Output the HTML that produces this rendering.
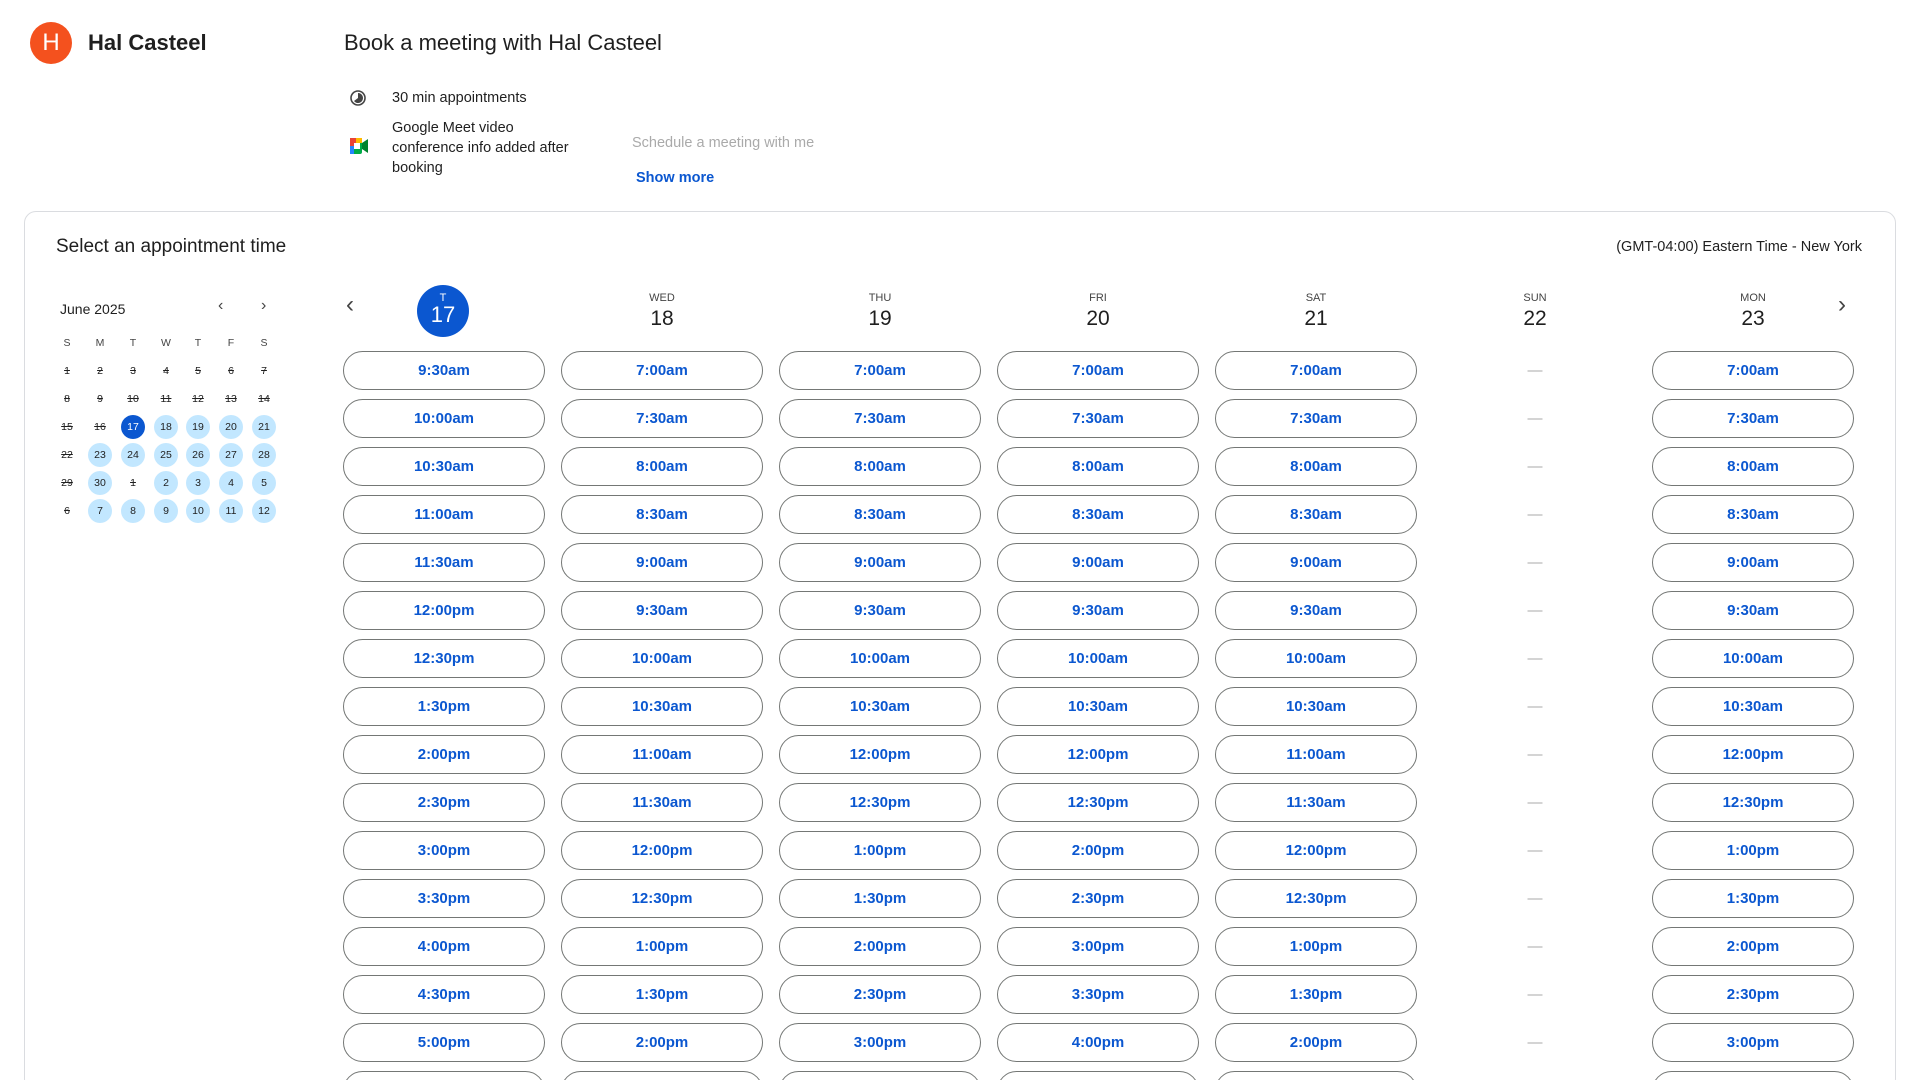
<!DOCTYPE html><html><head><meta charset="utf-8"><style>
*{box-sizing:border-box;margin:0;padding:0}
html{height:1080px;overflow:hidden}
body{width:1920px;height:1080px;overflow:hidden;background:#fff;font-family:"Liberation Sans",sans-serif;color:#1f1f1f;position:relative}
.a{position:absolute}
.card{position:absolute;left:24px;top:211px;width:1872px;height:880px;border:1.5px solid #dadce0;border-radius:12px}
.col{position:absolute;top:351px;width:202px;display:flex;flex-direction:column;gap:9px}
.col div{height:39px;border:1px solid #747775;border-radius:20px;color:#0b57d0;font-size:15px;font-weight:bold;display:flex;align-items:center;justify-content:center}
.col.sun div{border:none;color:#aaa;font-weight:normal}
.hd{position:absolute;top:292px;width:100px;text-align:center}
.hd .n{font-size:11px;color:#444}
.hd .d{font-size:21px;margin-top:3px}
.mc{position:absolute;left:50px;top:331px}
.mc span{position:absolute;width:24px;height:24px;margin:3px;border-radius:50%;display:flex;align-items:center;justify-content:center;font-size:10.5px;color:#1f1f1f}
.mc span.p{text-decoration:line-through}
.mc span.b{background:#c2e7ff}
.mc span.s{background:#0b57d0;color:#fff}
.mc span.h{font-size:10.5px;color:#444}
</style></head><body>
<div class="a" style="left:30px;top:22px;width:42px;height:42px;border-radius:50%;background:#f4511e;color:#fff;font-size:24px;display:flex;align-items:center;justify-content:center">H</div>
<div class="a" style="left:88px;top:30px;font-size:22px;font-weight:bold">Hal Casteel</div>
<div class="a" style="left:344px;top:30px;font-size:22px">Book a meeting with Hal Casteel</div>
<svg class="a" style="left:349px;top:89px" width="18" height="18" viewBox="0 0 18 18"><circle cx="9" cy="9" r="7" fill="none" stroke="#444" stroke-width="1.6"/><path d="M9 4 A5 5 0 1 1 5 12 L9 9Z" fill="#444"/></svg>
<div class="a" style="left:392px;top:90px;font-size:14.5px">30 min appointments</div>
<svg class="a" style="left:350px;top:138px" width="18" height="16" viewBox="0 0 18 16"><rect x="0" y="0" width="12" height="16" rx="2" fill="#00ac47"/><rect x="0" y="0" width="6" height="8" fill="#ea4335"/><rect x="0" y="8" width="4" height="8" fill="#2684fc"/><rect x="6" y="0" width="6" height="5" fill="#ffba00"/><rect x="4" y="5" width="6" height="6" fill="#fff"/><path d="M12 5 L18 1 L18 15 L12 11Z" fill="#00832d"/></svg>
<div class="a" style="left:392px;top:118px;font-size:14.5px;line-height:20px">Google Meet video<br>conference info added after<br>booking</div>
<div class="a" style="left:632px;top:135px;font-size:14.5px;color:#aaa">Schedule a meeting with me</div>
<div class="a" style="left:636px;top:170px;font-size:14.5px;color:#0b57d0;font-weight:bold">Show more</div>
<div class="card"></div>
<div class="a" style="left:56px;top:236px;font-size:19px">Select an appointment time</div>
<div class="a" style="right:58px;top:239px;font-size:14.5px">(GMT-04:00) Eastern Time - New York</div>
<div class="a" style="left:60px;top:301px;font-size:14px">June 2025</div>
<div class="a" style="left:218px;top:297px;font-size:16px;color:#444">&lsaquo;</div>
<div class="a" style="left:261px;top:297px;font-size:16px;color:#444">&rsaquo;</div>
<div class="mc">
<span class="h" style="left:2px;top:-3px">S</span><span class="h" style="left:35px;top:-3px">M</span><span class="h" style="left:68px;top:-3px">T</span><span class="h" style="left:101px;top:-3px">W</span><span class="h" style="left:133px;top:-3px">T</span><span class="h" style="left:166px;top:-3px">F</span><span class="h" style="left:199px;top:-3px">S</span>
<span class="p" style="left:2px;top:25px">1</span><span class="p" style="left:35px;top:25px">2</span><span class="p" style="left:68px;top:25px">3</span><span class="p" style="left:101px;top:25px">4</span><span class="p" style="left:133px;top:25px">5</span><span class="p" style="left:166px;top:25px">6</span><span class="p" style="left:199px;top:25px">7</span>
<span class="p" style="left:2px;top:53px">8</span><span class="p" style="left:35px;top:53px">9</span><span class="p" style="left:68px;top:53px">10</span><span class="p" style="left:101px;top:53px">11</span><span class="p" style="left:133px;top:53px">12</span><span class="p" style="left:166px;top:53px">13</span><span class="p" style="left:199px;top:53px">14</span>
<span class="p" style="left:2px;top:81px">15</span><span class="p" style="left:35px;top:81px">16</span><span class="s" style="left:68px;top:81px">17</span><span class="b" style="left:101px;top:81px">18</span><span class="b" style="left:133px;top:81px">19</span><span class="b" style="left:166px;top:81px">20</span><span class="b" style="left:199px;top:81px">21</span>
<span class="p" style="left:2px;top:109px">22</span><span class="b" style="left:35px;top:109px">23</span><span class="b" style="left:68px;top:109px">24</span><span class="b" style="left:101px;top:109px">25</span><span class="b" style="left:133px;top:109px">26</span><span class="b" style="left:166px;top:109px">27</span><span class="b" style="left:199px;top:109px">28</span>
<span class="p" style="left:2px;top:137px">29</span><span class="b" style="left:35px;top:137px">30</span><span class="p" style="left:68px;top:137px">1</span><span class="b" style="left:101px;top:137px">2</span><span class="b" style="left:133px;top:137px">3</span><span class="b" style="left:166px;top:137px">4</span><span class="b" style="left:199px;top:137px">5</span>
<span class="p" style="left:2px;top:165px">6</span><span class="b" style="left:35px;top:165px">7</span><span class="b" style="left:68px;top:165px">8</span><span class="b" style="left:101px;top:165px">9</span><span class="b" style="left:133px;top:165px">10</span><span class="b" style="left:166px;top:165px">11</span><span class="b" style="left:199px;top:165px">12</span>
</div>
<div class="a" style="left:346px;top:291px;font-size:24px;color:#444">&lsaquo;</div>
<div class="a" style="left:1838px;top:291px;font-size:24px;color:#444">&rsaquo;</div>
<div class="a" style="left:417px;top:285px;width:52px;height:52px;border-radius:50%;background:#0b57d0;color:#fff;text-align:center"><div style="font-size:11px;margin-top:7px">T</div><div style="font-size:22px;line-height:22px">17</div></div>
<div class="hd" style="left:612px"><div class="n">WED</div><div class="d">18</div></div>
<div class="hd" style="left:830px"><div class="n">THU</div><div class="d">19</div></div>
<div class="hd" style="left:1048px"><div class="n">FRI</div><div class="d">20</div></div>
<div class="hd" style="left:1266px"><div class="n">SAT</div><div class="d">21</div></div>
<div class="hd" style="left:1485px"><div class="n">SUN</div><div class="d">22</div></div>
<div class="hd" style="left:1703px"><div class="n">MON</div><div class="d">23</div></div>
<div class="col" style="left:343px"><div>9:30am</div><div>10:00am</div><div>10:30am</div><div>11:00am</div><div>11:30am</div><div>12:00pm</div><div>12:30pm</div><div>1:30pm</div><div>2:00pm</div><div>2:30pm</div><div>3:00pm</div><div>3:30pm</div><div>4:00pm</div><div>4:30pm</div><div>5:00pm</div><div>5:30pm</div></div>
<div class="col" style="left:561px"><div>7:00am</div><div>7:30am</div><div>8:00am</div><div>8:30am</div><div>9:00am</div><div>9:30am</div><div>10:00am</div><div>10:30am</div><div>11:00am</div><div>11:30am</div><div>12:00pm</div><div>12:30pm</div><div>1:00pm</div><div>1:30pm</div><div>2:00pm</div><div>2:30pm</div></div>
<div class="col" style="left:779px"><div>7:00am</div><div>7:30am</div><div>8:00am</div><div>8:30am</div><div>9:00am</div><div>9:30am</div><div>10:00am</div><div>10:30am</div><div>12:00pm</div><div>12:30pm</div><div>1:00pm</div><div>1:30pm</div><div>2:00pm</div><div>2:30pm</div><div>3:00pm</div><div>3:30pm</div></div>
<div class="col" style="left:997px"><div>7:00am</div><div>7:30am</div><div>8:00am</div><div>8:30am</div><div>9:00am</div><div>9:30am</div><div>10:00am</div><div>10:30am</div><div>12:00pm</div><div>12:30pm</div><div>2:00pm</div><div>2:30pm</div><div>3:00pm</div><div>3:30pm</div><div>4:00pm</div><div>4:30pm</div></div>
<div class="col" style="left:1215px"><div>7:00am</div><div>7:30am</div><div>8:00am</div><div>8:30am</div><div>9:00am</div><div>9:30am</div><div>10:00am</div><div>10:30am</div><div>11:00am</div><div>11:30am</div><div>12:00pm</div><div>12:30pm</div><div>1:00pm</div><div>1:30pm</div><div>2:00pm</div><div>2:30pm</div></div>
<div class="col sun" style="left:1434px"><div>—</div><div>—</div><div>—</div><div>—</div><div>—</div><div>—</div><div>—</div><div>—</div><div>—</div><div>—</div><div>—</div><div>—</div><div>—</div><div>—</div><div>—</div></div>
<div class="col" style="left:1652px"><div>7:00am</div><div>7:30am</div><div>8:00am</div><div>8:30am</div><div>9:00am</div><div>9:30am</div><div>10:00am</div><div>10:30am</div><div>12:00pm</div><div>12:30pm</div><div>1:00pm</div><div>1:30pm</div><div>2:00pm</div><div>2:30pm</div><div>3:00pm</div><div>3:30pm</div></div>
</body></html>
